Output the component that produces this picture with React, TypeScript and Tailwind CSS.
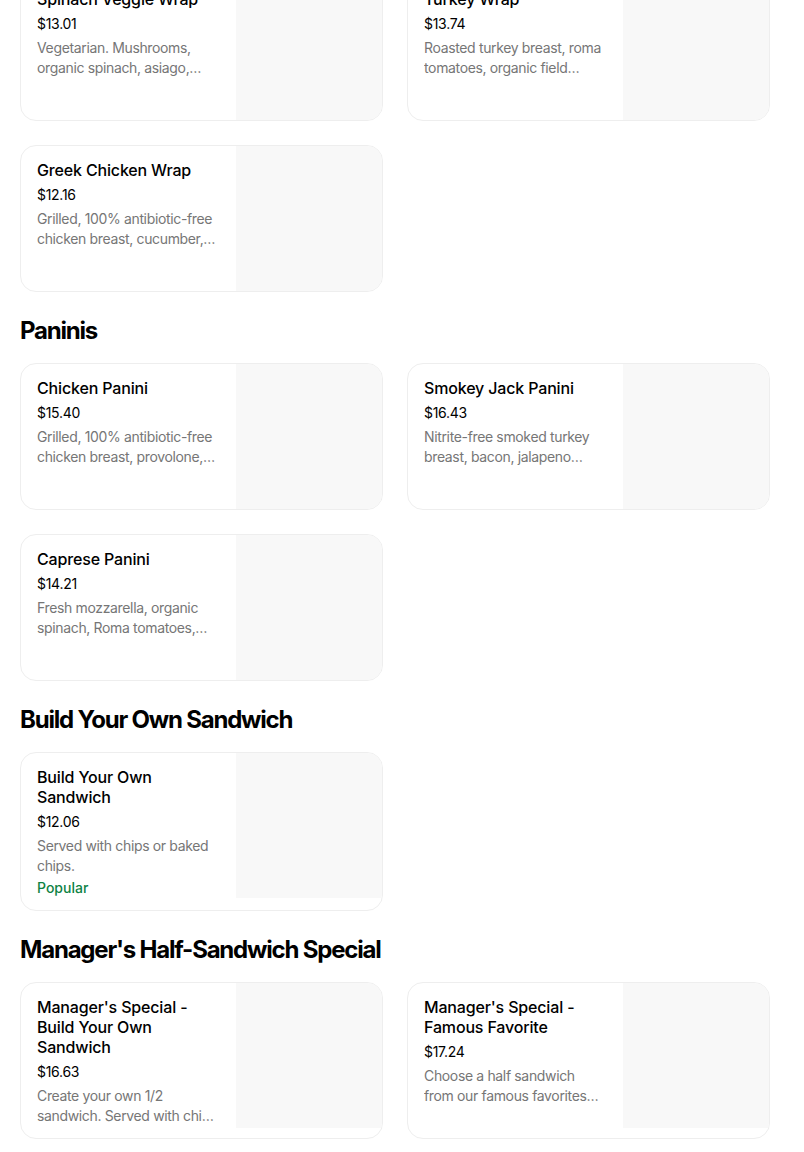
type Item = {
  name: string;
  price: string;
  desc: string;
  popular?: boolean;
};

type Section = {
  title?: string;
  items: Item[];
};

const sections: Section[] = [
  {
    items: [
      {
        name: "Spinach Veggie Wrap",
        price: "$13.01",
        desc: "Vegetarian. Mushrooms, organic spinach, asiago, provolone, roasted red peppers and pesto.",
      },
      {
        name: "Turkey Wrap",
        price: "$13.74",
        desc: "Roasted turkey breast, roma tomatoes, organic field greens, provolone and mayo.",
      },
      {
        name: "Greek Chicken Wrap",
        price: "$12.16",
        desc: "Grilled, 100% antibiotic-free chicken breast, cucumber, feta, tomatoes and tzatziki.",
      },
    ],
  },
  {
    title: "Paninis",
    items: [
      {
        name: "Chicken Panini",
        price: "$15.40",
        desc: "Grilled, 100% antibiotic-free chicken breast, provolone, pesto and roasted red peppers.",
      },
      {
        name: "Smokey Jack Panini",
        price: "$16.43",
        desc: "Nitrite-free smoked turkey breast, bacon, jalapeno Monterey Jack cheese and chipotle mayo.",
      },
      {
        name: "Caprese Panini",
        price: "$14.21",
        desc: "Fresh mozzarella, organic spinach, Roma tomatoes, basil pesto and balsamic glaze.",
      },
    ],
  },
  {
    title: "Build Your Own Sandwich",
    items: [
      {
        name: "Build Your Own Sandwich",
        price: "$12.06",
        desc: "Served with chips or baked chips.",
        popular: true,
      },
    ],
  },
  {
    title: "Manager's Half-Sandwich Special",
    items: [
      {
        name: "Manager's Special - Build Your Own Sandwich",
        price: "$16.63",
        desc: "Create your own 1/2 sandwich. Served with chips and a cup of soup or side salad.",
      },
      {
        name: "Manager's Special - Famous Favorite",
        price: "$17.24",
        desc: "Choose a half sandwich from our famous favorites menu, served with chips and a cup of soup.",
      },
    ],
  },
];

function ItemCard({ item }: { item: Item }) {
  return (
    <div className="flex rounded-2xl border border-[#eeeeee] bg-white overflow-hidden">
      <div className="flex-1 min-w-0 pl-4 pr-4 pt-[14px] pb-3">
        <div className="text-[16px] leading-5 font-medium tracking-[-0.01em] text-black">{item.name}</div>
        <div className="mt-[5px] text-[14px] leading-5 tracking-[-0.02em] text-black">{item.price}</div>
        <div className="mt-1 text-[14px] leading-5 tracking-[-0.025em] text-[#767676] line-clamp-2">
          {item.desc}
        </div>
        {item.popular && (
          <div className="mt-0.5 text-[14px] leading-5 font-medium text-[#0e8345]">Popular</div>
        )}
      </div>
      <div className="w-[146px] h-[145px] shrink-0 bg-[#f8f8f8]"></div>
    </div>
  );
}

export default function App() {
  return (
    <div className="bg-white min-h-screen font-['Inter',sans-serif] overflow-hidden">
      <div className="w-[750px] ml-5 -mt-[26px] pb-6">
        {sections.map((section, i) => (
          <section key={i}>
            {section.title && (
              <h2 className="pt-[23px] pb-4 text-[24px] leading-8 font-bold tracking-[-0.05em] text-black">
                {section.title}
              </h2>
            )}
            <div className="grid grid-cols-2 gap-6">
              {section.items.map((item) => (
                <ItemCard key={item.name} item={item} />
              ))}
            </div>
          </section>
        ))}
      </div>
    </div>
  );
}
